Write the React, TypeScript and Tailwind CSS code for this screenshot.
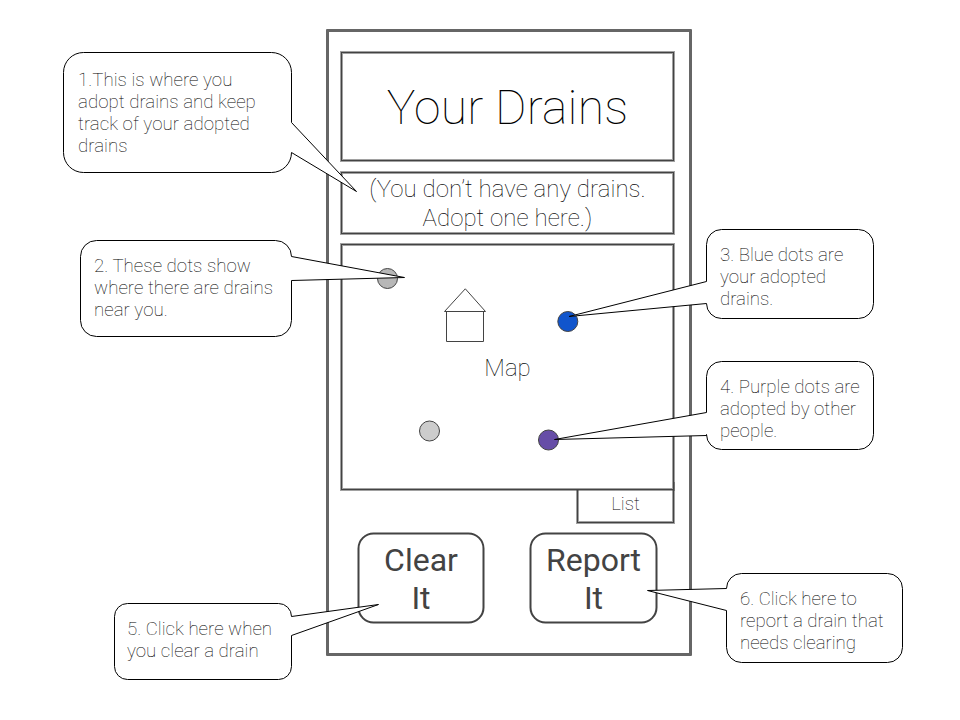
import React from "react";

type Side = "left" | "right";

interface Callout {
  lines: string[];
  box: { l: number; t: number; r: number; b: number; radius: number };
  tailSide: Side;
  tail: { y1: number; y2: number; tipX: number; tipY: number };
  textClass: string;
}

const callouts: Callout[] = [
  {
    lines: ["1.This is where you", "adopt drains and keep", "track of your adopted", "drains"],
    box: { l: 63.5, t: 52.5, r: 291.5, b: 172.5, radius: 20 },
    tailSide: "right",
    tail: { y1: 122.5, y2: 152.5, tipX: 356.5, tipY: 191.5 },
    textClass: "left-[78px] top-[69px] tracking-[0.04px]",
  },
  {
    lines: ["2. These dots show", "where there are drains", "near you."],
    box: { l: 80.5, t: 240.5, r: 291.5, b: 336.5, radius: 16 },
    tailSide: "right",
    tail: { y1: 256.5, y2: 280.5, tipX: 404.5, tipY: 277.5 },
    textClass: "left-[94px] top-[255px] tracking-[0.04px]",
  },
  {
    lines: ["3. Blue dots are", "your adopted", "drains."],
    box: { l: 706.5, t: 229.5, r: 873.5, b: 318.5, radius: 15 },
    tailSide: "left",
    tail: { y1: 281.5, y2: 303.5, tipX: 569, tipY: 316.5 },
    textClass: "left-[720px] top-[244px]",
  },
  {
    lines: ["4. Purple dots are", "adopted by other", "people."],
    box: { l: 706.5, t: 361.5, r: 873.5, b: 449.5, radius: 15 },
    tailSide: "left",
    tail: { y1: 412.5, y2: 435.5, tipX: 554.5, tipY: 439.5 },
    textClass: "left-[720px] top-[376px]",
  },
  {
    lines: ["5. Click here when", "you clear a drain"],
    box: { l: 114.5, t: 603.5, r: 291.5, b: 679.5, radius: 13 },
    tailSide: "right",
    tail: { y1: 616.5, y2: 635.5, tipX: 378.5, tipY: 604.5 },
    textClass: "left-[127px] top-[618px] tracking-[0.02px]",
  },
  {
    lines: ["6. Click here to", "report a drain that", "needs clearing"],
    box: { l: 726.5, t: 573.5, r: 902.5, b: 662.5, radius: 15 },
    tailSide: "left",
    tail: { y1: 588.5, y2: 610.5, tipX: 647.5, tipY: 590.5 },
    textClass: "left-[740px] top-[588px]",
  },
];

// Dark hairline with a softer pixel on either side.
const frame =
  "border border-[#434343] shadow-[0_0_0_1px_#43434380,inset_0_0_0_1px_#43434380]";

// Rounded bubble whose outline runs out to the tip of its tail and back.
function bubblePath({ box, tail, tailSide }: Callout): string {
  const { l, t, r, b, radius: q } = box;
  const tip = `${tail.tipX} ${tail.tipY}`;
  const right =
    tailSide === "right" ? `V${tail.y1} L${tip} L${r} ${tail.y2} V${b - q}` : `V${b - q}`;
  const left =
    tailSide === "left" ? `V${tail.y2} L${tip} L${l} ${tail.y1} V${t + q}` : `V${t + q}`;
  return `M${l + q} ${t} H${r - q} A${q} ${q} 0 0 1 ${r} ${t + q} ${right} A${q} ${q} 0 0 1 ${r - q} ${b} H${l + q} A${q} ${q} 0 0 1 ${l} ${b - q} ${left} A${q} ${q} 0 0 1 ${l + q} ${t} Z`;
}

function CalloutText({ callout }: { callout: Callout }) {
  return (
    <p
      className={`absolute text-[18.67px] leading-[22px] font-thin whitespace-nowrap text-black ${callout.textClass}`}
    >
      {callout.lines.map((line) => (
        <span key={line} className="block">
          {line}
        </span>
      ))}
    </p>
  );
}

function MapDrawing() {
  return (
    <svg className="absolute -top-px -left-px" width="333" height="246" viewBox="341 244 333 246" fill="none" stroke="#434343">
      <circle cx="387.5" cy="278.5" r="10" fill="#b7b7b7" />
      <circle cx="567.8" cy="321.5" r="10" fill="#1155cc" />
      <circle cx="429.5" cy="431" r="10" fill="#cccccc" />
      <circle cx="548.5" cy="440" r="10" fill="#674ea7" />
      <path d="M444.5 311.5 L465.3 288.8 L485.5 311.5 Z" />
      <path d="M446.5 311.5 H483.5 V341.5 H446.5 Z" />
    </svg>
  );
}

function ActionButton({ first, second, className }: { first: string; second: string; className: string }) {
  return (
    <button
      className={`relative h-[90px] pt-[2px] text-[32px] leading-[38px] font-normal text-[#434343] before:absolute before:-top-px before:-left-px before:h-[91px] before:translate-[0.5px] before:rounded-[16px] before:border-2 before:border-[#434343] before:content-[''] ${className}`}
    >
      <span className="block">{first}</span>
      <span className="block">{second}</span>
    </button>
  );
}

export default function App() {
  return (
    <div className="relative h-[720px] w-[960px] overflow-hidden bg-white pt-[29px] pl-[326px] font-[Roboto,'Liberation_Sans',sans-serif] text-black">
      <main className="flex h-[627px] w-[366px] flex-col rounded-[1px] border-3 border-[#666666] pt-[20px] pr-[15px] pl-[12px]">
        <h1
          className={`flex h-[109px] shrink-0 items-center justify-center pt-[3px] text-[48px] leading-[56px] font-thin tracking-[0.2px] ${frame}`}
        >
          Your Drains
        </h1>
        <p
          className={`mt-[11px] flex h-[62px] shrink-0 flex-col items-center justify-center pt-[1px] text-[24px] leading-[29px] font-thin tracking-[0.06px] ${frame}`}
        >
          <span>(You don’t have any drains.</span>
          <span>Adopt one here.)</span>
        </p>
        <section
          className={`relative z-10 mt-[10px] flex h-[246px] shrink-0 items-center justify-center bg-white pt-[3px] ${frame}`}
        >
          <MapDrawing />
          <span className="text-[24px] leading-[29px] font-thin">Map</span>
        </section>
        <div
          className={`-mt-[7px] flex h-[40px] w-[97px] shrink-0 justify-center self-end pt-[9px] text-[18.67px] leading-[22px] font-thin ${frame}`}
        >
          List
        </div>
        <div className="mt-[10px] flex pl-[17px]">
          <ActionButton first="Clear" second="It" className="w-[126px] before:w-[127px]" />
          <ActionButton first="Report" second="It" className="ml-[46px] w-[127px] before:w-[128px]" />
        </div>
      </main>

      <svg className="absolute top-0 left-0 z-20" width="960" height="720" viewBox="0 0 960 720" fill="white" stroke="black">
        {callouts.map((c) => (
          <path key={c.lines[0]} d={bubblePath(c)} strokeLinejoin="round" />
        ))}
      </svg>
      <div className="absolute top-0 left-0 z-30">
        {callouts.map((c) => (
          <CalloutText key={c.lines[0]} callout={c} />
        ))}
      </div>
    </div>
  );
}
